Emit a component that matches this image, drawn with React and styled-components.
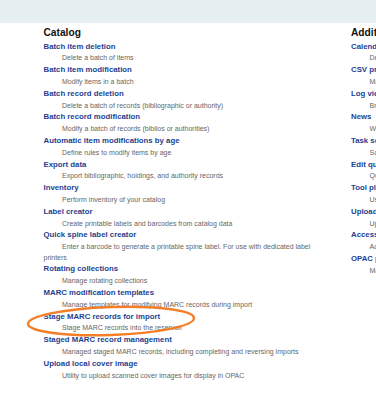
import React from 'react'
import styled, { createGlobalStyle } from 'styled-components'

const GlobalStyle = createGlobalStyle`
  html, body {
    margin: 0;
    padding: 0;
    background: #fff;
    overflow: hidden;
  }
  body {
    font-family: "Liberation Sans", Arial, sans-serif;
  }
`

const Page = styled.div`
  width: 376px;
  height: 399px;
  overflow: hidden;
`

const TopBar = styled.div`
  height: 23px;
  background: #e5eef1;
`

const Columns = styled.div`
  display: grid;
  grid-template-columns: 282px 300px;
  column-gap: 25.5px;
  padding: 4px 0 0 43.5px;
  width: max-content;
`

const Heading = styled.h3`
  margin: 0 0 1.6px;
  font-size: 10.2px;
  line-height: 12px;
  font-weight: bold;
  color: #111;
  white-space: nowrap;
`

const List = styled.dl`
  margin: 0;
`

const Item = styled.div`
  position: relative;
`

const ItemLink = styled.dt`
  font-size: 7.8px;
  line-height: 12px;
  font-weight: bold;
  color: #1d3f8f;
  white-space: nowrap;
`

const ItemDesc = styled.dd`
  margin: 0;
  padding: 0.8px 0 0.4px;
  text-indent: 18.5px;
  font-size: 7px;
  line-height: 10.4px;
  color: #666;
`

const Oval = styled.svg`
  position: absolute;
  left: 0;
  top: 0;
  overflow: visible;
  pointer-events: none;
`

const catalog = [
  ['Batch item deletion', 'Delete a batch of items'],
  ['Batch item modification', 'Modify items in a batch'],
  ['Batch record deletion', 'Delete a batch of records (bibliographic or authority)'],
  ['Batch record modification', 'Modify a batch of records (biblios or authorities)'],
  ['Automatic item modifications by age', 'Define rules to modify items by age'],
  ['Export data', 'Export bibliographic, holdings, and authority records'],
  ['Inventory', 'Perform inventory of your catalog'],
  ['Label creator', 'Create printable labels and barcodes from catalog data'],
  ['Quick spine label creator', 'Enter a barcode to generate a printable spine label. For use with dedicated label printers'],
  ['Rotating collections', 'Manage rotating collections'],
  ['MARC modification templates', 'Manage templates for modifying MARC records during import'],
  ['Stage MARC records for import', 'Stage MARC records into the reservoir', true],
  ['Staged MARC record management', 'Managed staged MARC records, including completing and reversing imports'],
  ['Upload local cover image', 'Utility to upload scanned cover images for display in OPAC'],
]

const additional = [
  ['Calendar', 'Define days when the library is closed'],
  ['CSV profiles', 'Manage CSV export profiles'],
  ['Log viewer', 'Browse the system logs'],
  ['News', 'Write news for the OPAC and staff interfaces'],
  ['Task scheduler', 'Schedule tasks to run'],
  ['Edit quotes for QOTD feature', 'Quote editor for Quote of the day feature in OPAC'],
  ['Tool plugins', 'Use tool plugins'],
  ['Upload', 'Upload any type of file, even on the fly'],
  ['Access files', 'Access files stored on the server, like log files'],
  ['OPAC problem reports', 'Manage OPAC problem reports'],
]

// hand-drawn orange ring around the highlighted tool
const Highlight = () => (
  <Oval width='140' height='24'>
    <ellipse
      cx='67'
      cy='10'
      rx='83'
      ry='14'
      transform='rotate(-2 67 10)'
      fill='none'
      stroke='#f47d27'
      strokeWidth='2.4'
    />
  </Oval>
)

const ToolSection = ({ title, items }) => (
  <section>
    <Heading>{title}</Heading>
    <List>
      {items.map(([name, desc, marked]) => (
        <Item key={name}>
          <ItemLink>{name}</ItemLink>
          <ItemDesc>{desc}</ItemDesc>
          {marked && <Highlight />}
        </Item>
      ))}
    </List>
  </section>
)

const App = () => {
  return (
    <>
      <GlobalStyle />
      <Page>
        <TopBar />
        <Columns>
          <ToolSection title='Catalog' items={catalog} />
          <ToolSection title='Additional tools' items={additional} />
        </Columns>
      </Page>
    </>
  )
}

export default App
